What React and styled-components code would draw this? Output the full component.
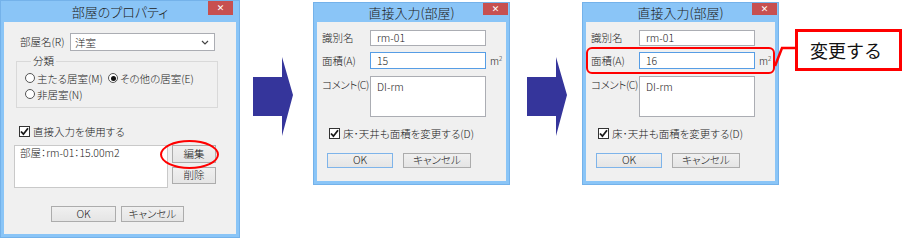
import styled, { createGlobalStyle } from "styled-components";

const GlobalStyle = createGlobalStyle`
  html, body {
    margin: 0;
    padding: 0;
    background: #ffffff;
  }
  body {
    font-family: "Noto Sans CJK JP", "Noto Sans", sans-serif;
    font-size: 10.5px;
    font-weight: 300;
    font-feature-settings: "palt";
    color: #1a1a1a;
  }
`;

const Page = styled.div`
  display: flex;
  align-items: flex-start;
  width: 904px;
  height: 241px;
  overflow: hidden;
`;

const Dialog = styled.div`
  position: relative;
  box-sizing: border-box;
  display: flex;
  flex-direction: column;
  flex: none;
  width: ${({ $w }) => $w}px;
  height: ${({ $h }) => $h}px;
  margin-top: ${({ $top }) => $top || 0}px;
  margin-left: ${({ $left }) => $left || 0}px;
  padding: 0 3px 3px;
  background: #8ac5f7;
  border: 1px solid #74b2ea;
`;

const TitleBar = styled.div`
  display: flex;
  align-items: center;
  justify-content: center;
  flex: none;
  height: ${({ $h }) => $h}px;
  font-size: 13px;
  line-height: 1;
  color: #222222;
`;

const CloseBtn = styled.div`
  position: absolute;
  top: 0;
  right: ${({ $right }) => $right}px;
  width: 25px;
  height: ${({ $h }) => $h}px;
  display: flex;
  align-items: center;
  justify-content: center;
  background: #c75050;
  color: #ffffff;
  font-family: "DejaVu Sans", sans-serif;
  font-size: 9px;
  font-weight: bold;
`;

const Body = styled.div`
  flex: 1;
  display: flex;
  flex-direction: column;
  background: #f0f0f0;
  padding: ${({ $pad }) => $pad};
`;

const Label = styled.span`
  flex: none;
  width: ${({ $w }) => ($w ? `${$w}px` : "auto")};
  white-space: nowrap;
  line-height: 12px;
`;

const NameRow = styled.div`
  display: flex;
  align-items: center;
  height: 18px;
  margin-left: 16px;
`;

const Select = styled.div`
  box-sizing: border-box;
  display: flex;
  align-items: center;
  justify-content: space-between;
  width: 145px;
  height: 18px;
  padding: 0 5px 0 4px;
  background: #ffffff;
  border: 1px solid #abadb3;
`;

const Group = styled.fieldset`
  box-sizing: border-box;
  width: 202px;
  margin: 4px 0 0 12px;
  padding: 4px 0 6px 8px;
  border: 1px solid #d9d9d9;
  min-width: 0;

  legend {
    padding: 0 2px;
    margin-left: 6px;
    line-height: 12px;
  }
`;

const RadioRow = styled.div`
  display: flex;
  align-items: center;
  height: 14px;
  margin-top: ${({ $mt }) => $mt || 0}px;
`;

const RadioItem = styled.label`
  display: flex;
  align-items: center;
  gap: 2px;
  width: ${({ $w }) => ($w ? `${$w}px` : "auto")};
  white-space: nowrap;
`;

const RadioDot = styled.span`
  box-sizing: border-box;
  display: flex;
  align-items: center;
  justify-content: center;
  width: 10px;
  height: 10px;
  border-radius: 50%;
  border: 1px solid #555555;
  background: #ffffff;

  &::after {
    content: "";
    display: ${({ $on }) => ($on ? "block" : "none")};
    width: 5px;
    height: 5px;
    border-radius: 50%;
    background: #111111;
  }
`;

const CheckRow = styled.label`
  display: flex;
  align-items: center;
  gap: 3px;
  height: 14px;
  margin: ${({ $m }) => $m};
  white-space: nowrap;
`;

const CheckBox = styled.span`
  box-sizing: border-box;
  display: flex;
  align-items: center;
  justify-content: center;
  width: 11px;
  height: 11px;
  border: 1px solid #333333;
  background: #ffffff;
`;

const ListRow = styled.div`
  display: flex;
  gap: 4px;
  margin: 7px 0 0 10px;
`;

const ListBox = styled.div`
  box-sizing: border-box;
  width: 154px;
  height: 43px;
  padding: 1px 5px;
  background: #ffffff;
  border: 1px solid #c9c9c9;
  line-height: 12px;
  white-space: nowrap;
`;

const ButtonCol = styled.div`
  display: flex;
  flex-direction: column;
  gap: 4px;
`;

const Button = styled.div`
  box-sizing: border-box;
  display: flex;
  align-items: center;
  justify-content: center;
  width: ${({ $w }) => $w}px;
  height: ${({ $h }) => $h}px;
  background: linear-gradient(#f0f0f0, #e5e5e5);
  border: 1px solid ${({ $default }) => ($default ? "#7eb4ea" : "#acacac")};
  line-height: 1;
  white-space: nowrap;
`;

const Footer = styled.div`
  display: flex;
  gap: ${({ $gap }) => $gap}px;
  margin: ${({ $m }) => $m};
`;

const Form = styled.div`
  display: grid;
  grid-template-columns: 48px 116px auto;
  grid-template-rows: 16px 17px 41px;
  row-gap: 6px;
  align-items: center;
`;

const Field = styled.div`
  box-sizing: border-box;
  height: 100%;
  display: flex;
  align-items: ${({ $multi }) => ($multi ? "flex-start" : "center")};
  padding: ${({ $multi }) => ($multi ? "4px 6px" : "0 6px")};
  background: #ffffff;
  border: 1px solid ${({ $focus }) => ($focus ? "#569de5" : "#abadb3")};
  margin-top: ${({ $multi }) => ($multi ? "1px" : "0")};
  line-height: 12px;
`;

const TopLabel = styled(Label)`
  align-self: start;
  margin-top: 4px;
  letter-spacing: -0.4px;
`;

const Unit = styled.span`
  margin-left: 4px;
  font-size: 10px;
  sup {
    font-size: 6px;
  }
`;

const Arrow = styled.svg`
  flex: none;
  margin-top: 57px;
  margin-left: ${({ $left }) => $left}px;
`;

const Highlight = styled.div`
  position: absolute;
  left: ${({ $x }) => $x}px;
  top: ${({ $y }) => $y}px;
  width: ${({ $w }) => $w}px;
  height: ${({ $h }) => $h}px;
  box-sizing: border-box;
  border: 2.5px solid #ff0000;
  border-radius: ${({ $round }) => $round};
  pointer-events: none;
`;

const Callout = styled.div`
  position: relative;
  flex: none;
  box-sizing: border-box;
  width: 107px;
  height: 42px;
  margin: 29px 0 0 16px;
  padding-left: 12px;
  display: flex;
  align-items: center;
  border: 3px solid #ff0000;
  background: #ffffff;
  font-size: 18px;
  font-weight: 400;
  font-feature-settings: normal;
  color: #111111;
`;

const Leader = styled.svg`
  position: absolute;
  left: -25px;
  top: -3px;
  overflow: visible;
`;

function Check() {
  return (
    <svg width="9" height="9" viewBox="0 0 9 9">
      <path d="M1 4.5 L3.4 7.2 L8 1.2" fill="none" stroke="#1a1a1a" strokeWidth="1.8" />
    </svg>
  );
}

function BlueArrow({ left }) {
  return (
    <Arrow $left={left} width="41" height="80" viewBox="0 0 41 80">
      <polygon points="1,20 30,20 30,0 41,38 30,79 30,59 1,59" fill="#35359b" />
    </Arrow>
  );
}

function PropertyDialog() {
  return (
    <Dialog $w={240} $h={238}>
      <TitleBar $h={21}>部屋のプロパティ</TitleBar>
      <CloseBtn $right={6} $h={14}>✕</CloseBtn>
      <Body $pad="11px 0 0 0">
        <NameRow>
          <Label $w={50}>部屋名(R)</Label>
          <Select>
            <span>洋室</span>
            <svg width="8" height="5" viewBox="0 0 8 5">
              <path d="M1 1 L4 4 L7 1" fill="none" stroke="#444" strokeWidth="1.2" />
            </svg>
          </Select>
        </NameRow>
        <Group>
          <legend>分類</legend>
          <RadioRow>
            <RadioItem $w={83}>
              <RadioDot />
              主たる居室(M)
            </RadioItem>
            <RadioItem>
              <RadioDot $on />
              その他の居室(E)
            </RadioItem>
          </RadioRow>
          <RadioRow $mt={2}>
            <RadioItem>
              <RadioDot />
              非居室(N)
            </RadioItem>
          </RadioRow>
        </Group>
        <CheckRow $m="16px 0 0 15px">
          <CheckBox>
            <Check />
          </CheckBox>
          直接入力を使用する
        </CheckRow>
        <ListRow>
          <ListBox>部屋：rm-01：15.00m2</ListBox>
          <ButtonCol>
            <Button $w={44} $h={18}>編集</Button>
            <Button $w={44} $h={17}>削除</Button>
          </ButtonCol>
        </ListRow>
        <Footer $gap={5} $m="18px 0 0 47px">
          <Button $w={65} $h={16}>OK</Button>
          <Button $w={63} $h={16}>キャンセル</Button>
        </Footer>
      </Body>
      <Highlight $x={159} $y={139} $w={59} $h={29} $round="50%" />
    </Dialog>
  );
}

function DirectInputDialog({ area, left, marked }) {
  return (
    <Dialog $w={197} $h={183} $top={2} $left={left}>
      <TitleBar $h={19}>直接入力(部屋)</TitleBar>
      <CloseBtn $right={1} $h={12}>✕</CloseBtn>
      <Body $pad="8px 0 0 5px">
        <Form>
          <Label>識別名</Label>
          <Field>rm-01</Field>
          <span />
          <Label>面積(A)</Label>
          <Field $focus>{area}</Field>
          <Unit>
            m<sup>2</sup>
          </Unit>
          <TopLabel>コメント(C)</TopLabel>
          <Field $multi>DI-rm</Field>
          <span />
        </Form>
        <CheckRow $m="10px 0 0 7px">
          <CheckBox>
            <Check />
          </CheckBox>
          床･天井も面積を変更する(D)
        </CheckRow>
        <Footer $gap={10} $m="13px 0 0 5px">
          <Button $w={66} $h={15} $default>OK</Button>
          <Button $w={68} $h={15}>キャンセル</Button>
        </Footer>
      </Body>
      {marked && <Highlight $x={3} $y={44} $w={189} $h={27} $round="6px" />}
    </Dialog>
  );
}

export default function App() {
  return (
    <>
      <GlobalStyle />
      <Page>
        <PropertyDialog />
        <BlueArrow left={12} />
        <DirectInputDialog area="15" left={20} />
        <BlueArrow left={16} />
        <DirectInputDialog area="16" left={15} marked />
        <Callout>
          <Leader width="22" height="42" viewBox="0 0 22 42">
            <polyline points="22,19 9,19 2,37" fill="none" stroke="#ff0000" strokeWidth="2.5" />
          </Leader>
          変更する
        </Callout>
      </Page>
    </>
  );
}
